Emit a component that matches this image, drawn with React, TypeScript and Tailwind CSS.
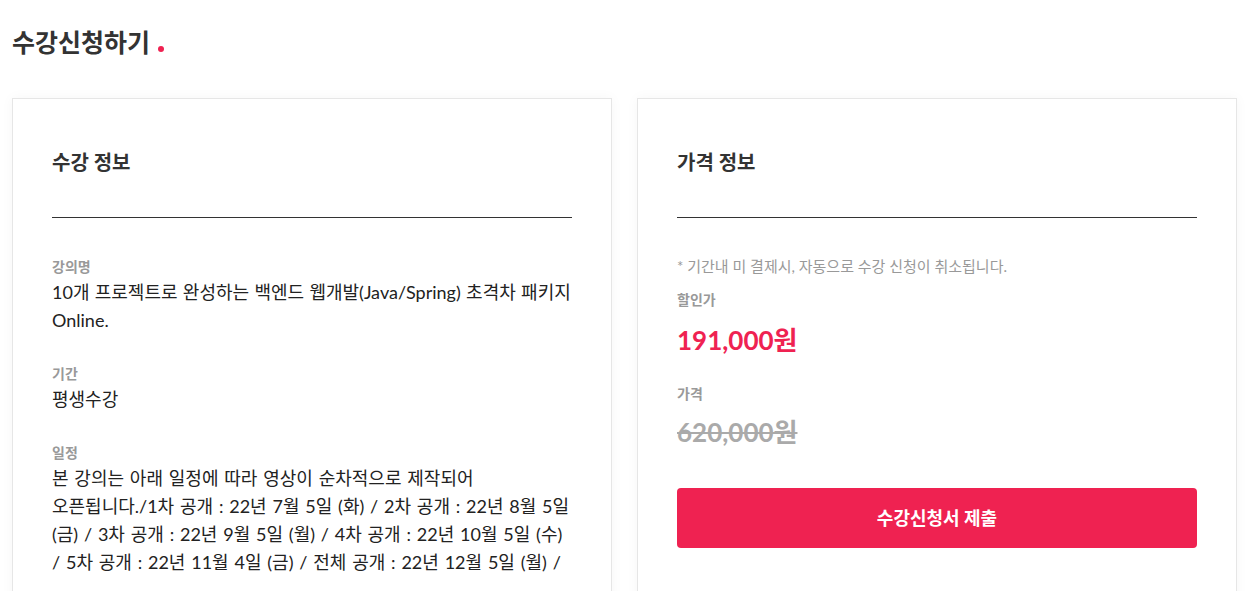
const Field = (props: { label: string; wide?: boolean; children: React.ReactNode }) => {
  return (
    <div className="mb-[29px]">
      <div className="text-[14px] leading-[22px] font-bold text-[#999]">{props.label}</div>
      <div
        className={
          props.wide
            ? "text-[18px] leading-[28px] text-[#222] break-keep [word-spacing:1.2px]"
            : "text-[18px] leading-[28px] text-[#222] break-keep [word-spacing:0.7px]"
        }
      >
        {props.children}
      </div>
    </div>
  );
};

const CardTitle = (props: { title: string }) => {
  return (
    <h3 className="text-[20px] leading-[30px] font-bold text-[#333] pb-[40px] border-b border-[#333] mb-[38px]">
      {props.title}
    </h3>
  );
};

export default function App() {
  return (
    <main
      className="min-h-screen bg-white px-[12px] pt-[26px] pb-10"
      style={{ fontFamily: 'Lato, "Noto Sans CJK KR", sans-serif' }}
    >
      <h2 className="flex items-end text-[25px] leading-[32px] font-bold text-[#333] mb-[40px]">
        수강신청하기
        <span className="ml-[8px] mb-[6px] w-[6px] h-[6px] rounded-full bg-[#ef2251]" />
      </h2>

      <div className="flex gap-[25px]">
        <section className="w-[600px] border border-[#e6e6e6] shadow-[0_0_12px_rgba(0,0,0,0.04)] px-[39px] pt-[48px] pb-10">
          <CardTitle title="수강 정보" />
          <Field label="강의명">10개 프로젝트로 완성하는 백엔드 웹개발(Java/Spring) 초격차 패키지 Online.</Field>
          <Field label="기간">평생수강</Field>
          <Field label="일정" wide>
            본 강의는 아래 일정에 따라 영상이 순차적으로 제작되어 오픈됩니다./1차 공개 : 22년 7월 5일 (화) / 2차 공개 : 22년 8월 5일 (금) / 3차 공개 : 22년 9월 5일 (월) / 4차 공개 : 22년 10월 5일 (수) / 5차 공개 : 22년 11월 4일 (금) / 전체 공개 : 22년 12월 5일 (월) /
          </Field>
        </section>

        <section className="w-[600px] border border-[#e6e6e6] shadow-[0_0_12px_rgba(0,0,0,0.04)] px-[39px] pt-[48px] pb-10">
          <CardTitle title="가격 정보" />
          <p className="text-[15px] leading-[20px] text-[#999] mb-[13px]">* 기간내 미 결제시, 자동으로 수강 신청이 취소됩니다.</p>
          <div className="text-[14px] leading-[22px] font-bold text-[#999]">할인가</div>
          <div className="text-[26px] leading-[40px] font-bold text-[#ef2251] mt-[9px] mb-[23px]">191,000원</div>
          <div className="text-[14px] leading-[22px] font-bold text-[#999]">가격</div>
          <div className="text-[26px] leading-[40px] font-bold text-[#aaa] line-through mt-[7px]">620,000원</div>
          <button className="mt-[36px] w-full h-[60px] rounded-[4px] bg-[#ef2251] text-white text-[18px] font-bold">
            수강신청서 제출
          </button>
        </section>
      </div>
    </main>
  );
}
